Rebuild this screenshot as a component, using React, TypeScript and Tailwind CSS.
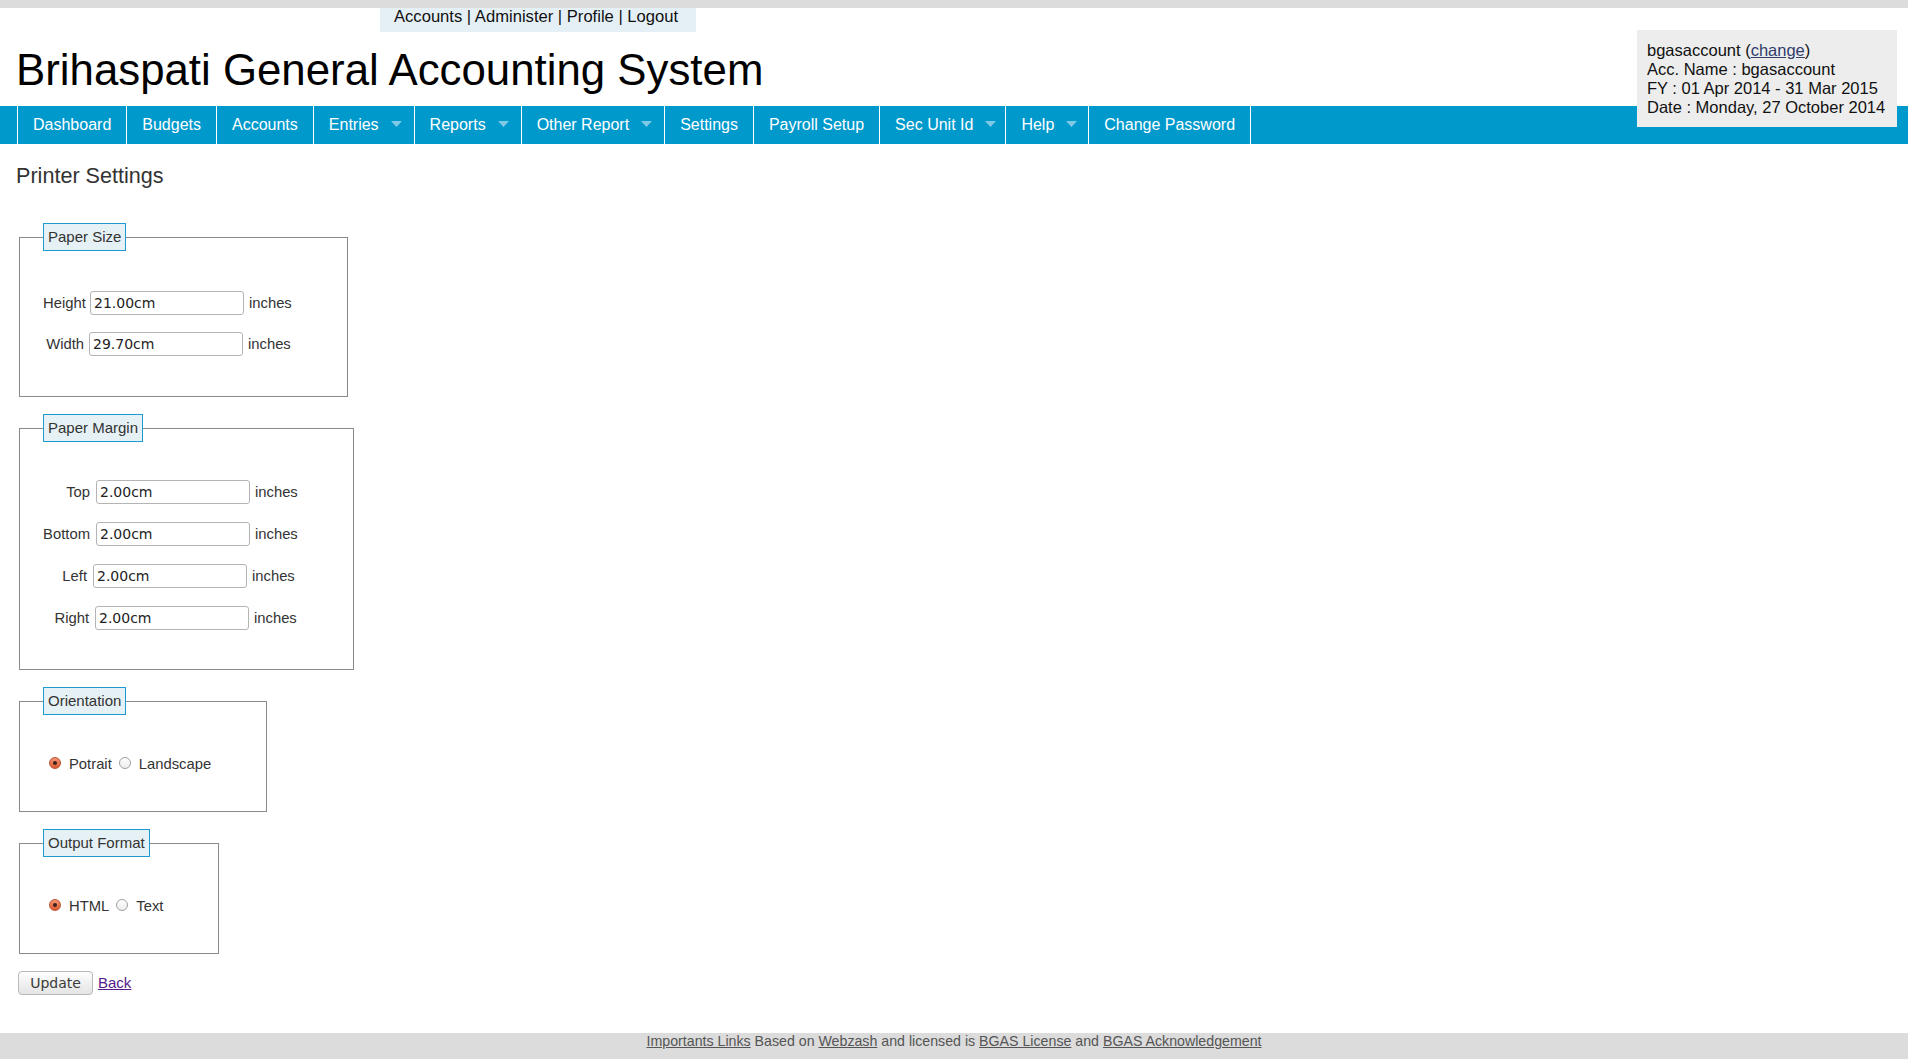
const navItems = [
  { label: 'Dashboard', pr: 'pr-[15px]' },
  { label: 'Budgets', pr: 'pr-[15px]' },
  { label: 'Accounts', pr: 'pr-[15px]' },
  { label: 'Entries', drop: true, pr: 'pr-[12px]' },
  { label: 'Reports', drop: true, pr: 'pr-[12px]' },
  { label: 'Other Report', drop: true, pr: 'pr-[12px]' },
  { label: 'Settings', pr: 'pr-[15px]' },
  { label: 'Payroll Setup', pr: 'pr-[15px]' },
  { label: 'Sec Unit Id', drop: true, pr: 'pr-[9px]' },
  { label: 'Help', drop: true, pr: 'pr-[11px]' },
  { label: 'Change Password', pr: 'pr-[15px]' },
]

const sizeRows = [
  { label: 'Height', value: '21.00cm', lw: 'w-[42px]', ml: 'ml-[5px]' },
  { label: 'Width', value: '29.70cm', lw: 'w-[41px]', ml: 'ml-[5px]' },
]

const marginRows = [
  { label: 'Top', value: '2.00cm', lw: 'w-[47px]', ml: 'ml-[6px]' },
  { label: 'Bottom', value: '2.00cm', lw: 'w-[47px]', ml: 'ml-[6px]' },
  { label: 'Left', value: '2.00cm', lw: 'w-[44px]', ml: 'ml-[6px]' },
  { label: 'Right', value: '2.00cm', lw: 'w-[46px]', ml: 'ml-[6px]' },
]

function Arrow() {
  return (
    <svg width="11" height="6" viewBox="0 0 11 6" className="ml-[12px] -mt-[2px]">
      <polygon points="0,0 11,0 5.5,6" fill="#7fc9e6" />
    </svg>
  )
}

function Radio({ checked }: { checked?: boolean }) {
  if (checked) {
    return (
      <span className="flex h-[12px] w-[12px] items-center justify-center rounded-full border border-[#b9532f] bg-linear-to-b from-[#f39373] to-[#de5a30]">
        <span className="block h-[4px] w-[4px] rounded-full bg-[#3d2219]" />
      </span>
    )
  }
  return <span className="block h-[12px] w-[12px] rounded-full border border-[#a0a0a0] bg-linear-to-b from-white to-[#ececec]" />
}

function Legend({ children }: { children: React.ReactNode }) {
  return (
    <legend className="border border-[#1d9ad0] bg-[#e6f1f6] px-[4px] py-[4px] text-[15px] leading-[18px] text-[#333]">
      {children}
    </legend>
  )
}

type Row = { label: string; value: string; lw: string; ml: string }

function InputRow({ row }: { row: Row }) {
  return (
    <div className="flex h-[24px] items-center text-[14.8px] text-[#333]">
      <span className={`text-right ${row.lw}`}>{row.label}</span>
      <input
        defaultValue={row.value}
        className={`${row.ml} h-[24px] w-[154px] rounded-[3px] border border-[#b4b4b4] bg-white px-[3px] font-['DejaVu_Sans',sans-serif] text-[14px] text-[#222] outline-none`}
      />
      <span className="ml-[5px]">inches</span>
    </div>
  )
}

function App() {
  return (
    <div className="relative h-screen overflow-hidden bg-white font-['Liberation_Sans',Arial,sans-serif]">
      <div className="h-[8px] bg-[#dcdcdc]" />

      <header>
        <div className="ml-[380px] h-[24px] w-[316px] bg-[#e5f0f6] pl-[14px] text-[16.6px] leading-[18px] text-[#111]">
          Accounts | Administer | Profile | Logout
        </div>
        <h1 className="mt-[13px] mb-[11px] pl-4 text-[43.8px] leading-[50px] text-black">
          Brihaspati General Accounting System
        </h1>
        <nav className="flex h-[38px] bg-[#0099cc] pl-[17px] text-[16px] text-white">
          {navItems.map((item, i) => (
            <div
              key={item.label}
              className={`flex h-full items-center border-l border-white pl-[15px] ${item.pr} ${i === navItems.length - 1 ? 'border-r' : ''}`}
            >
              <span>{item.label}</span>
              {item.drop && <Arrow />}
            </div>
          ))}
        </nav>
      </header>

      <div className="absolute top-[30px] right-[11px] w-[260px] bg-[#ededed] pt-[11px] pr-[6px] pb-[10px] pl-[10px] text-[16.5px] leading-[19px] text-[#111]">
        <div>
          bgasaccount (<a className="text-[#2f3d6b] underline">change</a>)
        </div>
        <div>Acc. Name : bgasaccount</div>
        <div>FY : 01 Apr 2014 - 31 Mar 2015</div>
        <div>Date : Monday, 27 October 2014</div>
      </div>

      <main className="pl-4 text-[#333]">
        <h2 className="mt-[20px] text-[21.6px] leading-[24px] text-[#333]">Printer Settings</h2>

        <form className="mt-[35px]">
          <fieldset className="mb-[17px] ml-[3px] w-fit border border-[#8a8a8a] pr-[55px] pl-[23px]">
            <Legend>Paper Size</Legend>
            <div className="flex flex-col gap-[17px] pt-[40px] pb-[40px]">
              {sizeRows.map((r) => (
                <InputRow key={r.label} row={r} />
              ))}
            </div>
          </fieldset>

          <fieldset className="mb-[17px] ml-[3px] w-fit border border-[#8a8a8a] pr-[55px] pl-[23px]">
            <Legend>Paper Margin</Legend>
            <div className="flex flex-col gap-[18px] pt-[38px] pb-[39px]">
              {marginRows.map((r) => (
                <InputRow key={r.label} row={r} />
              ))}
            </div>
          </fieldset>

          <fieldset className="mb-[17px] ml-[3px] w-fit border border-[#8a8a8a] pr-[55px] pl-[23px]">
            <Legend>Orientation</Legend>
            <div className="mt-[40px] mb-[38px] flex h-[18px] items-center text-[14.8px] leading-[18px] text-[#333]">
              <span className="ml-[6px] -mt-[2px]"><Radio checked /></span>
              <span className="ml-[8px]">Potrait</span>
              <span className="ml-[7px] -mt-[2px]"><Radio /></span>
              <span className="ml-[8px]">Landscape</span>
            </div>
          </fieldset>

          <fieldset className="mb-[17px] ml-[3px] w-fit border border-[#8a8a8a] pr-[55px] pl-[23px]">
            <Legend>Output Format</Legend>
            <div className="mt-[40px] mb-[38px] flex h-[18px] items-center text-[14.8px] leading-[18px] text-[#333]">
              <span className="ml-[6px] -mt-[2px]"><Radio checked /></span>
              <span className="ml-[8px]">HTML</span>
              <span className="ml-[7px] -mt-[2px]"><Radio /></span>
              <span className="ml-[8px]">Text</span>
            </div>
          </fieldset>

          <div className="mt-[1px] flex items-center">
            <button
              type="button"
              className="ml-[2px] h-[24px] w-[75px] rounded-[4px] border border-[#b9b9b9] bg-linear-to-b from-[#fefefe] to-[#e4e4e4] font-['DejaVu_Sans',sans-serif] text-[14px] text-[#3a3a3a]"
            >
              Update
            </button>
            <a className="ml-[5px] text-[15px] text-[#551a8b] underline">Back</a>
          </div>
        </form>
      </main>

      <footer className="mt-[38px] h-[40px] bg-[#dcdcdc] text-center text-[14.2px] leading-[17px] text-[#555]">
        <a className="underline">Importants Links</a> Based on <a className="underline">Webzash</a> and licensed is{' '}
        <a className="underline">BGAS License</a> and <a className="underline">BGAS Acknowledgement</a>
      </footer>
    </div>
  )
}

export default App
